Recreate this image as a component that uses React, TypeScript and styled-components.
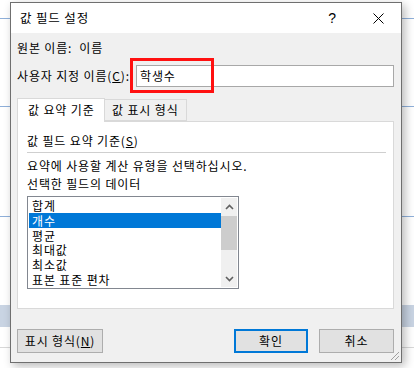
import React from "react";
import styled, { createGlobalStyle } from "styled-components";

const GlobalStyle = createGlobalStyle`
  html, body {
    margin: 0;
    padding: 0;
    background: #ffffff;
  }
  * {
    box-sizing: border-box;
  }
`;

const Sheet = styled.div`
  position: relative;
  width: 414px;
  height: 368px;
  overflow: hidden;
  padding: 2px 0 0 10px;
  font-family: "Noto Sans CJK KR", "Noto Sans", sans-serif;
  font-size: 12px;
  letter-spacing: 0.85px;
  color: #000;
  background-color: #ffffff;
  background-image:
    linear-gradient(#c9d4e3, #c9d4e3),
    linear-gradient(#8fb0da, #8fb0da),
    linear-gradient(#8fb0da, #8fb0da),
    linear-gradient(#8fb0da, #8fb0da),
    linear-gradient(#d8d8d8, #d8d8d8);
  background-size: 100% 22px, 100% 1px, 100% 1px, 100% 1px, 100% 1px;
  background-position: 0 305px, 0 18px, 0 106px, 0 216px, 0 347px;
  background-repeat: no-repeat;
`;

const Dialog = styled.div`
  width: 392px;
  height: 361px;
  background: #f0f0f0;
  border: 1px solid #6f6f6f;
  box-shadow: 3px 3px 9px rgba(0, 0, 0, 0.28);
  display: flex;
  flex-direction: column;
  position: relative;
`;

const TitleBar = styled.div`
  height: 30px;
  background: #ffffff;
  display: flex;
  align-items: center;
  padding-left: 9px;
  font-size: 12.5px;
`;

const Title = styled.div`
  flex: 1;
  line-height: 16px;
`;

const TitleButton = styled.div<{ $w: number }>`
  width: ${(p) => p.$w}px;
  height: 30px;
  display: flex;
  align-items: center;
  justify-content: center;
  font-family: "Liberation Sans", sans-serif;
  font-size: 14px;
`;

const Body = styled.div`
  flex: 1;
  display: flex;
  flex-direction: column;
  padding: 7px 7px 0 6px;
`;

const Line = styled.div`
  line-height: 16px;
  height: 16px;
  white-space: nowrap;
`;

const NameRow = styled.div`
  display: flex;
  align-items: center;
  margin-top: 9px;
  height: 22px;
`;

const Label = styled.div`
  width: 119px;
  line-height: 16px;
  white-space: nowrap;
`;

const InputWrap = styled.div`
  position: relative;
  flex: 1;
  height: 22px;
`;

const Input = styled.div`
  height: 22px;
  background: #fff;
  border: 1px solid #a8a8a8;
  padding: 2px 0 0 3px;
  line-height: 16px;
`;

const Highlight = styled.div`
  position: absolute;
  left: -6px;
  top: -7px;
  width: 84px;
  height: 35px;
  border: 3px solid #ff1010;
`;

const Tabs = styled.div`
  display: flex;
  align-items: flex-end;
  margin-top: 10px;
  height: 24px;
`;

const Tab = styled.div<{ $active?: boolean }>`
  height: ${(p) => (p.$active ? 24 : 22)}px;
  padding: ${(p) => (p.$active ? "3px 0 0 10px" : "2px 0 0 7px")};
  width: ${(p) => (p.$active ? 88 : 82)}px;
  background: ${(p) => (p.$active ? "#ffffff" : "#f0f0f0")};
  border: 1px solid #d9d9d9;
  border-bottom: ${(p) => (p.$active ? "none" : "1px solid #d9d9d9")};
  border-left: ${(p) => (p.$active ? "1px solid #d9d9d9" : "none")};
  line-height: 16px;
  white-space: nowrap;
  position: relative;
  z-index: ${(p) => (p.$active ? 1 : 0)};
  margin-bottom: ${(p) => (p.$active ? -1 : 0)}px;
`;

const Panel = styled.div`
  height: 188px;
  background: #ffffff;
  border: 1px solid #d9d9d9;
  padding: 11px 7px 0 9px;
  display: flex;
  flex-direction: column;
`;

const Underline = styled.span`
  text-decoration: underline;
  text-underline-offset: 1px;
`;

const Separator = styled.div`
  height: 1px;
  background: #a0a0a0;
  opacity: 0.5;
  margin: 3px 0 5px 0;
`;

const InfoLine = styled(Line)`
  margin-bottom: 2px;
`;

const ListBox = styled.div`
  margin-top: 4px;
  width: 212px;
  height: 93px;
  border: 1px solid #828790;
  background: #fff;
  display: flex;
  padding: 1px;
`;

const Items = styled.div`
  flex: 1;
  display: flex;
  flex-direction: column;
`;

const Item = styled.div<{ $selected?: boolean }>`
  height: 15px;
  line-height: 15px;
  padding-left: 3px;
  background: ${(p) => (p.$selected ? "#0078d7" : "transparent")};
  color: ${(p) => (p.$selected ? "#ffffff" : "#000")};
  white-space: nowrap;
  overflow: hidden;
`;

const ScrollBar = styled.div`
  width: 16px;
  background: #f0f0f0;
  display: flex;
  flex-direction: column;
  align-items: stretch;
`;

const Arrow = styled.div`
  height: 17px;
  display: flex;
  align-items: center;
  justify-content: center;
`;

const Track = styled.div`
  flex: 1;
  padding-top: 1px;
`;

const Thumb = styled.div`
  height: 34px;
  background: #cdcdcd;
`;

const ButtonRow = styled.div`
  display: flex;
  margin-top: 20px;
  gap: 11px;
`;

const Button = styled.button<{ $default?: boolean; $w: number }>`
  width: ${(p) => p.$w}px;
  height: 24px;
  font-family: inherit;
  font-size: 12px;
  letter-spacing: 0.85px;
  color: #000;
  background: #e1e1e1;
  border: ${(p) => (p.$default ? "2px solid #0078d7" : "1px solid #adadad")};
  padding: 0;
  line-height: 16px;
  display: flex;
  align-items: center;
  justify-content: center;
`;

const Spacer = styled.div`
  flex: 1;
`;

const Grip = styled.svg`
  position: absolute;
  right: 1px;
  bottom: 1px;
`;

const Chevron = ({ up }: { up?: boolean }) => (
  <svg width="9" height="6" viewBox="0 0 9 6">
    <path
      d={up ? "M1 5 L4.5 1.5 L8 5" : "M1 1 L4.5 4.5 L8 1"}
      fill="none"
      stroke="#606060"
      strokeWidth="1.6"
    />
  </svg>
);

const items = ["합계", "개수", "평균", "최대값", "최소값", "표본 표준 편차"];

export default function App() {
  return (
    <>
      <GlobalStyle />
      <Sheet>
        <Dialog>
          <TitleBar>
            <Title>값 필드 설정</Title>
            <TitleButton $w={45}>?</TitleButton>
            <TitleButton $w={46}>
              <svg width="11" height="11" viewBox="0 0 11 11">
                <path d="M0.5 0.5 L10.5 10.5 M10.5 0.5 L0.5 10.5" stroke="#000" strokeWidth="1" />
              </svg>
            </TitleButton>
          </TitleBar>
          <Body>
            <Line>원본 이름:&nbsp;&nbsp;이름</Line>
            <NameRow>
              <Label>
                사용자 지정 이름(<Underline>C</Underline>):
              </Label>
              <InputWrap>
                <Input>학생수</Input>
                <Highlight />
              </InputWrap>
            </NameRow>
            <Tabs>
              <Tab $active>값 요약 기준</Tab>
              <Tab>값 표시 형식</Tab>
            </Tabs>
            <Panel>
              <Line>
                값 필드 요약 기준(<Underline>S</Underline>)
              </Line>
              <Separator />
              <InfoLine>요약에 사용할 계산 유형을 선택하십시오.</InfoLine>
              <Line>선택한 필드의 데이터</Line>
              <ListBox>
                <Items>
                  {items.map((it, i) => (
                    <Item key={it} $selected={i === 1}>
                      {it}
                    </Item>
                  ))}
                </Items>
                <ScrollBar>
                  <Arrow>
                    <Chevron up />
                  </Arrow>
                  <Track>
                    <Thumb />
                  </Track>
                  <Arrow>
                    <Chevron />
                  </Arrow>
                </ScrollBar>
              </ListBox>
            </Panel>
            <ButtonRow>
              <Button $w={86}>
                표시 형식(<Underline>N</Underline>)
              </Button>
              <Spacer />
              <Button $w={74} $default>
                확인
              </Button>
              <Button $w={75}>취소</Button>
            </ButtonRow>
          </Body>
          <Grip width="12" height="12" viewBox="0 0 12 12">
            <path d="M11 3 L3 11 M11 7 L7 11" stroke="#a0a0a0" strokeWidth="1" />
          </Grip>
        </Dialog>
      </Sheet>
    </>
  );
}
